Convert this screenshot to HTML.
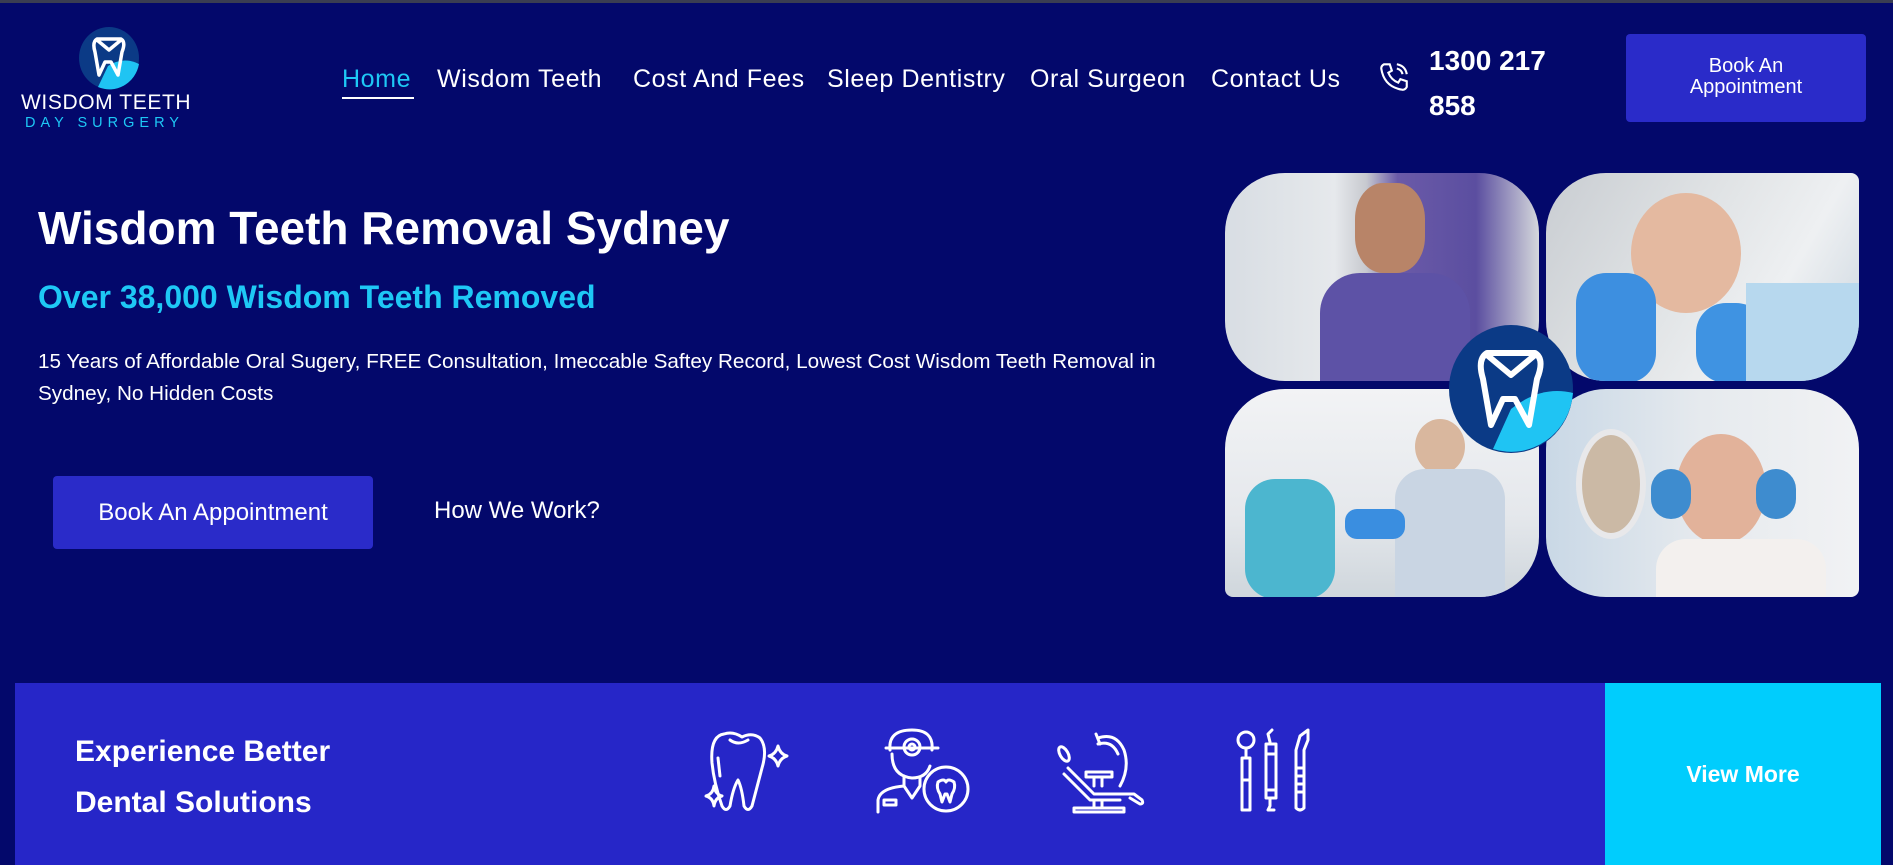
<!DOCTYPE html>
<html><head><meta charset="utf-8"><style>
*{margin:0;padding:0;box-sizing:border-box}
body{width:1893px;height:865px;background:#03086b;font-family:"Liberation Sans",sans-serif;color:#fff;position:relative;overflow:hidden}
.abs{position:absolute}
.topbar{left:0;top:0;width:1893px;height:3px;background:#3a3d52}
.nav a{position:absolute;top:65px;font-size:25px;color:#fff;text-decoration:none;white-space:nowrap;letter-spacing:0.6px}
.btn{background:#2a2bc9;border-radius:4px;color:#fff;text-align:center}
.img{position:absolute;border-radius:60px;overflow:hidden}
</style></head><body>
<div class="abs topbar"></div>
<svg class="abs" style="left:78px;top:26px" width="62" height="64" viewBox="0 0 62 64">
<ellipse cx="31" cy="32" rx="30" ry="31" fill="#0b3a86"/>
<path d="M30 40 Q45 30 61 38 A30 31 0 0 1 20 61 Z" fill="#1fc4f3"/>
<path d="M19 13 L43 13 Q48 16 44 26 L40 49 L33 36 L27 36 L21 49 L17 26 Q14 16 19 13 Z M19 14 L31 24 L43 14" fill="none" stroke="#fff" stroke-width="3.5" stroke-linejoin="round"/>
</svg>
<div class="abs" style="left:21px;top:92px;font-size:21px;line-height:22px;letter-spacing:0.6px;color:#fff">WISDOM TEETH</div>
<div class="abs" style="left:25px;top:116px;font-size:14.5px;line-height:15px;letter-spacing:5px;color:#1ec8f5">DAY SURGERY</div>
<div class="nav">
<a style="left:342px;color:#1ec8f5">Home</a>
<div class="abs" style="left:342px;top:97px;width:72px;height:2px;background:#fff"></div>
<a style="left:437px">Wisdom Teeth</a>
<a style="left:633px">Cost And Fees</a>
<a style="left:827px">Sleep Dentistry</a>
<a style="left:1030px">Oral Surgeon</a>
<a style="left:1211px">Contact Us</a>
</div>
<svg class="abs" style="left:1377px;top:60px" width="34" height="34" viewBox="0 0 24 24" fill="none" stroke="#fff" stroke-width="1.5"><path d="M5 3 L9 3 L10.5 7.5 L8 9 Q10 14 15 16 L16.5 13.5 L21 15 L21 19 Q20 21 18 21 Q5 19 3 6 Q3 4 5 3 Z"/><path d="M14 3 Q20 4 21 10 M14 6 Q17.5 7 18 10"/></svg>
<div class="abs" style="left:1429px;top:38px;font-size:28px;font-weight:bold;line-height:45px">1300 217<br>858</div>
<div class="abs btn" style="left:1626px;top:34px;width:240px;height:88px;padding-top:22px;font-size:20px;line-height:21px">Book An<br>Appointment</div>

<div class="abs" style="left:38px;top:201px;font-size:46px;font-weight:bold;white-space:nowrap">Wisdom Teeth Removal Sydney</div>
<div class="abs" style="left:38px;top:279px;font-size:32px;font-weight:bold;color:#1ec8f5;white-space:nowrap">Over 38,000 Wisdom Teeth Removed</div>
<div class="abs" style="left:38px;top:346px;width:1175px;font-size:20.7px;line-height:32px">15 Years of Affordable Oral Sugery, FREE Consultation, Imeccable Saftey Record, Lowest Cost Wisdom Teeth Removal in Sydney, No Hidden Costs</div>
<div class="abs btn" style="left:53px;top:476px;width:320px;height:73px;line-height:73px;font-size:24px">Book An Appointment</div>
<div class="abs" style="left:434px;top:497px;font-size:24px">How We Work?</div>

<div class="img" style="left:1225px;top:173px;width:314px;height:208px;background:linear-gradient(90deg,#d8dde3 0%,#e6e9ec 35%,#c7c9cf 45%,#6a5aa8 55%,#5b4ea0 80%,#d5d8dc 100%)">
<div class="abs" style="left:130px;top:10px;width:70px;height:90px;border-radius:40%;background:#b88468"></div>
<div class="abs" style="left:95px;top:100px;width:150px;height:120px;border-radius:40px 40px 0 0;background:#5d52a6"></div>
</div>
<div class="img" style="left:1546px;top:173px;width:313px;height:208px;border-top-right-radius:8px;background:linear-gradient(120deg,#c9cdd2 0%,#dfe2e4 40%,#eef0f2 70%,#c9d4de 100%)">
<div class="abs" style="left:85px;top:20px;width:110px;height:120px;border-radius:50%;background:#e4b9a0"></div>
<div class="abs" style="left:30px;top:100px;width:80px;height:110px;border-radius:30px;background:#3d8fe0"></div>
<div class="abs" style="left:150px;top:130px;width:70px;height:80px;border-radius:30px;background:#3f93e2"></div>
<div class="abs" style="left:200px;top:110px;width:120px;height:100px;background:#b7d8ee"></div>
</div>
<div class="img" style="left:1225px;top:389px;width:314px;height:208px;border-bottom-left-radius:8px;background:linear-gradient(180deg,#f2f3f5 0%,#e5e8ec 60%,#cfd6dc 100%)">
<div class="abs" style="left:20px;top:90px;width:90px;height:120px;border-radius:30px;background:#4cb6cf"></div>
<div class="abs" style="left:190px;top:30px;width:50px;height:55px;border-radius:50%;background:#d9b79e"></div>
<div class="abs" style="left:170px;top:80px;width:110px;height:130px;border-radius:30px 30px 0 0;background:#c9d5e3"></div>
<div class="abs" style="left:120px;top:120px;width:60px;height:30px;border-radius:12px;background:#3a8ee0"></div>
</div>
<div class="img" style="left:1546px;top:389px;width:313px;height:208px;border-bottom-right-radius:8px;background:linear-gradient(90deg,#c9d8e6 0%,#e6eaee 50%,#f1f2f4 100%)">
<div class="abs" style="left:30px;top:40px;width:70px;height:110px;border-radius:50%;background:#cbb9a5;border:6px solid #e8e8ea"></div>
<div class="abs" style="left:130px;top:45px;width:90px;height:110px;border-radius:50%;background:#e2b29a"></div>
<div class="abs" style="left:105px;top:80px;width:40px;height:50px;border-radius:20px;background:#3e8ccf"></div>
<div class="abs" style="left:210px;top:80px;width:40px;height:50px;border-radius:20px;background:#3e8ccf"></div>
<div class="abs" style="left:110px;top:150px;width:170px;height:60px;border-radius:30px 30px 0 0;background:#f3f0ee"></div>
</div>
<svg class="abs" style="left:1447px;top:325px" width="128" height="128" viewBox="0 0 62 64">
<ellipse cx="31" cy="32" rx="31" ry="32" fill="#0b3a86"/>
<path d="M31 42 Q46 30 62 34 A31 32 0 0 1 22 62 Z" fill="#1fc4f3"/>
<path d="M19 14 L43 14 Q48 17 44 27 L40 50 L33 37 L27 37 L21 50 L17 27 Q14 17 19 14 Z M19 15 L31 25 L43 15" fill="none" stroke="#fff" stroke-width="3" stroke-linejoin="round"/>
</svg>

<div class="abs" style="left:15px;top:683px;width:1590px;height:182px;background:#2626c8"></div>
<div class="abs" style="left:1605px;top:683px;width:276px;height:182px;background:#00cdfd;text-align:center;line-height:182px;font-size:23px;font-weight:bold">View More</div>
<div class="abs" style="left:75px;top:726px;font-size:30px;font-weight:bold;line-height:51px">Experience Better<br>Dental Solutions</div>
<svg class="abs" style="left:700px;top:728px" width="100" height="86" viewBox="0 0 100 86" fill="none" stroke="#fff" stroke-width="3" stroke-linecap="round" stroke-linejoin="round">
<path d="M24 6 Q10 8 12 35 Q14 55 22 78 Q26 85 30 78 Q33 60 38 52 Q42 60 44 78 Q48 85 52 78 Q58 55 62 40 Q68 20 60 10 Q52 4 42 9 Q33 3 24 6 Z"/><path d="M30 12 Q38 18 48 12"/><path d="M18 30 L20 48"/>
<path d="M78 18 Q80 26 87 28 Q80 30 78 38 Q76 30 69 28 Q76 26 78 18 Z"/><path d="M14 58 Q15 66 22 68 Q15 70 14 78 Q13 70 6 68 Q13 66 14 58 Z"/></svg>
<svg class="abs" style="left:876px;top:726px" width="96" height="90" viewBox="0 0 96 90" fill="none" stroke="#fff" stroke-width="3" stroke-linecap="round" stroke-linejoin="round">
<path d="M14 24 Q12 4 36 4 Q58 4 56 24"/><path d="M10 22 L62 22"/><circle cx="36" cy="21" r="8"/><circle cx="36" cy="21" r="3"/>
<path d="M16 28 Q16 50 36 52 Q50 52 54 40"/><path d="M28 50 L28 60 L36 72 L44 60 L44 52"/>
<path d="M2 86 L2 74 Q4 62 28 60"/><rect x="8" y="74" width="12" height="5"/><circle cx="70" cy="63" r="22"/>
<path d="M62 56 Q68 52 70 56 Q72 52 78 56 Q80 62 76 68 L74 76 L71 68 L69 68 L66 76 L64 68 Q60 62 62 56 Z"/></svg>
<svg class="abs" style="left:1054px;top:728px" width="94" height="86" viewBox="0 0 94 86" fill="none" stroke="#fff" stroke-width="3" stroke-linecap="round" stroke-linejoin="round">
<path d="M42 6 L46 16"/><path d="M44 10 Q62 4 70 22 Q76 40 66 58"/><path d="M44 16 Q58 12 64 26"/>
<ellipse cx="10" cy="26" rx="4" ry="8" transform="rotate(-30 10 26)"/><path d="M14 40 L40 66 L80 66 L88 72 Q90 76 86 76 L76 70"/><path d="M10 46 L36 72 L66 72"/>
<rect x="32" y="44" width="26" height="5"/><path d="M40 49 L40 58 M48 49 L48 58"/><path d="M40 72 L40 80 M48 72 L48 80"/><rect x="20" y="80" width="50" height="4"/></svg>
<svg class="abs" style="left:1234px;top:728px" width="82" height="86" viewBox="0 0 82 86" fill="none" stroke="#fff" stroke-width="3" stroke-linecap="round" stroke-linejoin="round">
<circle cx="12" cy="12" r="8"/><path d="M12 20 L12 30 M8 30 L16 30 L16 82 L8 82 Z M8 52 L16 52"/>
<path d="M38 2 L34 6 L36 14 M32 16 L42 16 L42 70 L32 70 Z M32 26 L42 26 M32 62 L42 62 M36 70 L36 78 L34 82 L40 82"/>
<path d="M74 2 L66 8 L62 22 L62 80 Q66 84 70 80 L70 22 L74 12 Z M62 40 L70 40 M62 48 L70 48 M62 56 L70 56 M62 64 L70 64"/></svg>
</body></html>
